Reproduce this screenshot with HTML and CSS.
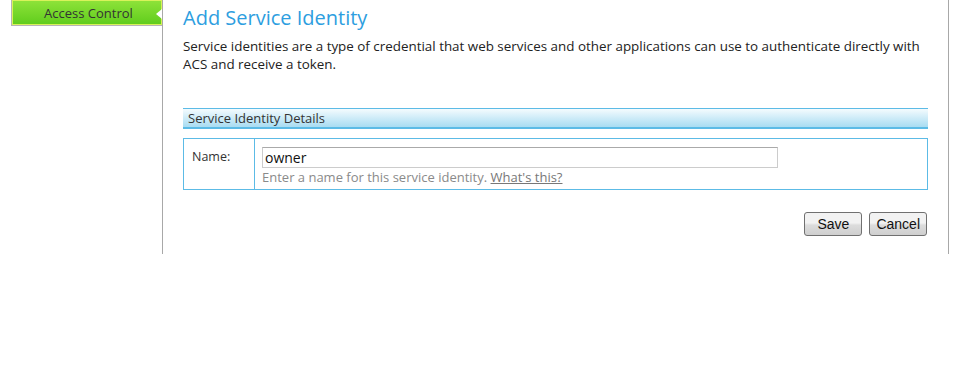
FILE: index.html
```html
<!DOCTYPE html>
<html lang="en">
<head>
    <meta charset="UTF-8">
    <title>Add Service Identity</title>
    <link rel="stylesheet" href="styles.css">
</head>
<body>
    <div class="page">
        <div class="sidebar">
            <div class="nav-item">
                <span>Access Control</span>
                <div class="notch"></div>
            </div>
        </div>

        <div class="main">
            <h1 class="title">Add Service Identity</h1>
            <p class="intro">Service identities are a type of credential that web services and other applications can use to authenticate directly with ACS and receive a token.</p>

            <div class="section-head">Service Identity Details</div>

            <div class="details">
                <div class="label">Name:</div>
                <div class="field">
                    <input type="text" class="name-input" value="owner">
                    <div class="hint">Enter a name for this service identity. <a href="#">What's this?</a></div>
                </div>
            </div>

            <div class="actions">
                <button>Save</button>
                <button>Cancel</button>
            </div>
        </div>
    </div>
</body>
</html>
```

FILE: styles.css
```css
body {margin: 0; font-family: 'Open Sans', 'Noto Sans', sans-serif; background: #fff; color: #222;}
.page {display: flex; align-items: flex-start;}
.sidebar {width: 162px; height: 254px; border-right: 1px solid #a8a8a8; flex-shrink: 0;}
.nav-item {position: relative; margin-left: 11px; height: 26px; border-left: 1px solid #b5b5b5; border-bottom: 1px solid #b5b5b5; box-sizing: border-box; background: linear-gradient(#8fe33a, #5fcc1c); box-shadow: inset 0 0 0 1px #d8f25a; text-align: center; font-size: 13px; line-height: 26px; color: #333; padding-left: 3px;}
.notch {position: absolute; right: 0; top: 9px; width: 0; height: 0; border-top: 5px solid transparent; border-bottom: 5px solid transparent; border-right: 6px solid #fff;}
.main {width: 745px; height: 254px; padding: 0 20px; border-right: 1px solid #a8a8a8;}
.title {margin: 5px 0 0; font-weight: normal; font-size: 20px; color: #2d9ee0; line-height: 26px;}
.intro {margin: 6px 0 0; font-size: 13.4px; line-height: 18px; color: #222;}
.section-head {margin-top: 35px; height: 18px; border-top: 1px solid #5cbbe6; border-bottom: 2px solid #5cbbe6; background: linear-gradient(#f4fbfe, #a8dcf2); font-size: 13px; line-height: 18px; padding-left: 5px; color: #333;}
.details {display: flex; margin-top: 9px; border: 1px solid #5cbbe6; height: 52px; box-sizing: border-box;}
.label {width: 62px; border-right: 1px solid #5cbbe6; padding: 9px 0 0 8px; font-size: 12.5px; color: #333;}
.field {padding: 8px 0 0 7px;}
.name-input {display: block; width: 516px; height: 21px; box-sizing: border-box; border: 1px solid #ccc; border-top-color: #aaa; padding: 0 2px; font-family: inherit; font-size: 14px; color: #111; outline: none;}
.hint {margin-top: 1px; font-size: 13px; color: #8a8a8a; line-height: 17px;}
.hint a {color: #777;}
.actions {display: flex; justify-content: flex-end; gap: 7px; margin-top: 22px; padding-right: 1px;}
.actions button {height: 24px; padding: 0 6px; border: 1px solid #707070; border-radius: 3px; background: linear-gradient(#f2f2f2 45%, #dcdcdc 55%, #cfcfcf); font-family: 'Liberation Sans', sans-serif; font-size: 14px; color: #111;}
.actions button:first-child {width: 58px;}
```
